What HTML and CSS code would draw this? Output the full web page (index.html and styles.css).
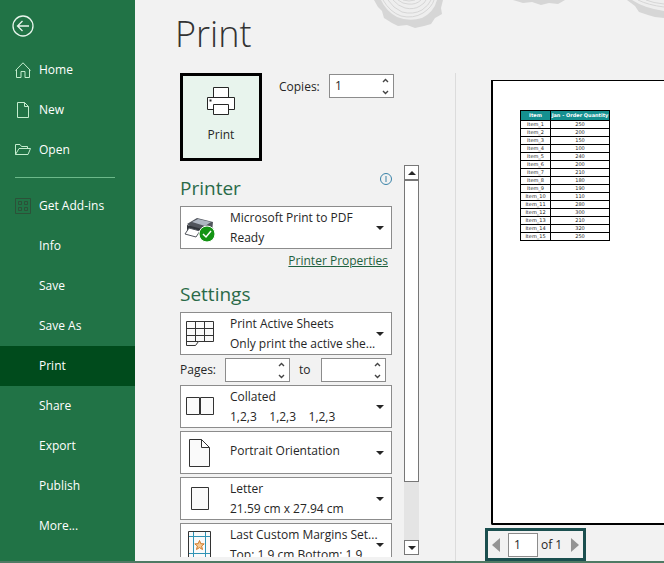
FILE: index.html
```html
<!DOCTYPE html>
<html lang="en">
<head>
    <meta charset="UTF-8">
    <meta name="viewport" content="width=device-width, initial-scale=1.0">
    <title>Print</title>
    <link rel="stylesheet" href="styles.css">
</head>
<body>
    <nav class="sidebar">
        <button type="button" class="back-btn" aria-label="Back">
            <svg width="22" height="22" viewBox="0 0 22 22"><circle cx="11" cy="11" r="10"/><path d="M17 11H5.5M10.5 6L5.5 11l5 5"/></svg>
        </button>
        <a href="#home" class="nav-item">
            <svg class="nav-icon" width="16" height="16" viewBox="0 0 16 16"><path d="M.5 8.5L8 .8l7.500 7.700M1.500 7.500v8h4.500v-6h4v6h4.500v-8"/></svg>
            Home
        </a>
        <a href="#new" class="nav-item">
            <svg class="nav-icon" width="16" height="16" viewBox="0 0 16 16"><path d="M2.500.5h7l4 4v11h-11zM9.500.5v4h4"/></svg>
            New
        </a>
        <a href="#open" class="nav-item">
            <svg class="nav-icon" width="16" height="16" viewBox="0 0 16 16"><path d="M.5 12.500v-10h4.500l1.500 2h6v2M.5 12.500l3.500-6h11.500l-2.500 6z"/></svg>
            Open
        </a>
        <hr class="nav-divider">
        <a href="#addins" class="nav-item">
            <svg class="nav-icon dark" width="16" height="16" viewBox="0 0 16 16"><path d="M.5.5h15v15H.5zM3.500 3.500h3v3h-3zM9.500 3.500h3v3h-3zM3.500 9.500h3v3h-3zM9.500 9.500h3v3h-3z"/></svg>
            Get Add-ins
        </a>
        <a href="#info" class="nav-item">Info</a>
        <a href="#save" class="nav-item">Save</a>
        <a href="#save-as" class="nav-item">Save As</a>
        <a href="#print" class="nav-item active">Print</a>
        <a href="#share" class="nav-item">Share</a>
        <a href="#export" class="nav-item">Export</a>
        <a href="#publish" class="nav-item">Publish</a>
        <a href="#more" class="nav-item">More...</a>
    </nav>

    <main class="main">
        <!-- tree ring decoration -->
        <svg class="rings" width="296" height="30" viewBox="0 0 296 30" aria-hidden="true">
            <path class="bark" d="M6 0l4 7 4 4 2 7 8 5 6 3 9-1 8 3 9-2 7-2 4-6 7-4-1-6 2-8z"/>
            <path class="wood" d="M13 0q5 11 16 17 12 5 25 1 12-6 15-18z"/>
            <path class="grain" d="M15 0q7 12 18 16 12 3 22-3 9-6 11-13M20 0q5 8 14 12 11 3 20-2 7-5 9-10M25 0q5 6 12 8 9 2 15-2 5-3 6-6M30 0q5 4 10 4 8 1 13-4M35 0q6 2 12 0"/>
            <path class="bark" d="M145 0l10 3 9-1 9 3 8-2 9 1 7-4z"/>
            <path class="bark" d="M259 0l8 6 4 6 9 3 7 2 9 1V0z"/>
            <path class="wood" d="M264 0q12 8 32 11V0z"/>
            <path class="grain" d="M270 0q10 5 26 7M278 0q7 3 18 4"/>
        </svg>

        <h1 class="title">Print</h1>

        <div class="columns">
            <section class="options">
                <div class="job">
                    <button type="button" class="print-btn">
                        <svg width="28" height="28" viewBox="0 0 28 28"><path d="M6.500 10.500V.5h15v10M6.500 22.500h-6v-12h27v12h-6M6.500 17.500h15v10h-15z"/><path d="M2.500 12.500h2v2h-2z" fill="#262626" stroke="none"/></svg>
                        Print
                    </button>
                    <label for="copies" class="copies-label">Copies:</label>
                    <div class="spin-box">
                        <input type="number" id="copies" value="1" min="1">
                        <svg class="spin-arrows" width="7" height="17" viewBox="0 0 7 17"><path d="M1 4l2.500-2.500L6 4M1 13l2.500 2.500L6 13"/></svg>
                    </div>
                </div>

                <div class="panel">
                    <div class="panel-content">
                        <div class="heading-row">
                            <h2>Printer</h2>
                            <svg class="info" width="14" height="14" viewBox="0 0 14 14"><circle cx="7" cy="7" r="5.500"/><path d="M7 4v6"/></svg>
                        </div>
                        <div class="picker">
                            <select aria-label="Printer"><option>Microsoft Print to PDF</option></select>
                            <svg class="picker-icon" width="32" height="28" viewBox="0 0 32 28">
                                <path d="M3 10l10-6 16 4-1 10-10 3z" fill="#50545c"/>
                                <path d="M8 8l6-3 13 3-6 4z" fill="#aeb6c2"/>
                                <path d="M3 11l15 4v6L3 17z" fill="#30343a"/>
                                <path d="M5 14l11 3-4 6-11-3z" fill="#fff" stroke="#50545c"/>
                                <circle cx="23" cy="20" r="8" fill="#149414" stroke="#fff"/>
                                <path d="M19 20l3 3 5-6" fill="none" stroke="#fff" stroke-width="1.500"/>
                            </svg>
                            <span class="detail">Ready</span>
                            <span class="caret"></span>
                        </div>
                        <a href="#properties" class="properties">Printer Properties</a>

                        <h2 class="settings-heading">Settings</h2>
                        <div class="picker">
                            <select aria-label="What to print"><option>Print Active Sheets</option></select>
                            <svg class="picker-icon" width="32" height="28" viewBox="0 0 32 28"><path class="ink" d="M2.500 1.500h27v20h-15l-3 4h-9zM2.500 21.500h12M2.500 8.500h27M2.500 15.500h27M11.500 1.500v20M20.500 1.500v20"/></svg>
                            <span class="detail">Only print the active she...</span>
                            <span class="caret"></span>
                        </div>
                        <div class="pages">
                            <label for="from" class="pages-label">Pages:</label>
                            <div class="spin-box">
                                <input type="number" id="from" min="1">
                                <svg class="spin-arrows" width="7" height="17" viewBox="0 0 7 17"><path d="M1 4l2.500-2.500L6 4M1 13l2.500 2.500L6 13"/></svg>
                            </div>
                            <label for="to" class="to-label">to</label>
                            <div class="spin-box">
                                <input type="number" id="to" min="1">
                                <svg class="spin-arrows" width="7" height="17" viewBox="0 0 7 17"><path d="M1 4l2.500-2.500L6 4M1 13l2.500 2.500L6 13"/></svg>
                            </div>
                        </div>
                        <div class="picker">
                            <select aria-label="Collation"><option>Collated</option></select>
                            <svg class="picker-icon" width="32" height="28" viewBox="0 0 32 28"><path class="ink" d="M2.500 4.500h13v17h-13zM16.500 4.500h13v17h-13z"/></svg>
                            <span class="detail">1,2,3 &nbsp;&nbsp; 1,2,3 &nbsp;&nbsp; 1,2,3</span>
                            <span class="caret"></span>
                        </div>
                        <div class="picker single">
                            <select aria-label="Orientation"><option>Portrait Orientation</option></select>
                            <svg class="picker-icon" width="32" height="28" viewBox="0 0 32 28"><path class="ink" d="M5.500.5h12l8 8v19h-20zM17.500.5v8h8"/></svg>
                            <span class="caret"></span>
                        </div>
                        <div class="picker">
                            <select aria-label="Paper size"><option>Letter</option></select>
                            <svg class="picker-icon" width="32" height="28" viewBox="0 0 32 28"><path class="ink" d="M7.500 2.500h17v22h-17z"/></svg>
                            <span class="detail">21.59 cm x 27.94 cm</span>
                            <span class="caret"></span>
                        </div>
                        <div class="picker">
                            <select aria-label="Margins"><option>Last Custom Margins Set...</option></select>
                            <svg class="picker-icon" width="32" height="28" viewBox="0 0 32 28">
                                <path class="ink" d="M4.500.5h22v27h-22z"/>
                                <path d="M9.500 1v26M21.500 1v26M5 5.500h21M5 22.500h21" fill="none" stroke="#2f93b5"/>
                                <path d="M15.500 9.500l1.300 3.200 3.400.2-2.600 2.200.9 3.400-3-1.900-3 1.900.9-3.400-2.600-2.200 3.400-.2z" fill="#f6c992" stroke="#cf7a28"/>
                            </svg>
                            <span class="detail">Top: 1.9 cm Bottom: 1.9</span>
                            <span class="caret"></span>
                        </div>
                    </div>
                    <div class="scrollbar">
                        <button type="button" class="scroll-btn" aria-label="Scroll up"><span class="caret up"></span></button>
                        <div class="track"><div class="thumb"></div></div>
                        <button type="button" class="scroll-btn" aria-label="Scroll down"><span class="caret"></span></button>
                    </div>
                </div>
            </section>

            <section class="preview">
                <div class="sheet">
                    <table class="data">
                        <thead>
                            <tr><th>Item</th><th>Jan - Order Quantity</th></tr>
                        </thead>
                        <tbody>
                            <tr><td>Item_1</td><td>250</td></tr>
                            <tr><td>Item_2</td><td>200</td></tr>
                            <tr><td>Item_3</td><td>150</td></tr>
                            <tr><td>Item_4</td><td>100</td></tr>
                            <tr><td>Item_5</td><td>240</td></tr>
                            <tr><td>Item_6</td><td>200</td></tr>
                            <tr><td>Item_7</td><td>210</td></tr>
                            <tr><td>Item_8</td><td>180</td></tr>
                            <tr><td>Item_9</td><td>190</td></tr>
                            <tr><td>Item_10</td><td>110</td></tr>
                            <tr><td>Item_11</td><td>280</td></tr>
                            <tr><td>Item_12</td><td>300</td></tr>
                            <tr><td>Item_13</td><td>210</td></tr>
                            <tr><td>Item_14</td><td>320</td></tr>
                            <tr><td>Item_15</td><td>250</td></tr>
                        </tbody>
                    </table>
                </div>
                <div class="pager">
                    <button type="button" class="page-btn prev" aria-label="Previous page"></button>
                    <input type="text" id="page" value="1">
                    <label for="page">of 1</label>
                    <button type="button" class="page-btn next" aria-label="Next page"></button>
                </div>
            </section>
        </div>
    </main>
</body>
</html>
```
FILE: styles.css
```css
* {
    margin: 0;
    padding: 0;
    box-sizing: border-box;
}

body {
    font-family: 'Open Sans', 'Segoe UI', sans-serif;
    font-size: 12px;
    line-height: 20px;
    color: #262626;
    background: #f2f2f2;
    height: 100vh;
    display: flex;
    overflow: hidden;
    border-bottom: 2px solid #4f7a64;
}

button, input, select {
    font: inherit;
    color: inherit;
}

svg {
    fill: none;
    flex-shrink: 0;
}

/* Sidebar */
.sidebar {
    flex: 0 0 135px;
    background: #217346;
    padding-top: 15px;
}

.back-btn {
    display: block;
    width: 22px;
    height: 22px;
    margin: 0 0 13px 12px;
    border: none;
    background: none;
    cursor: pointer;
}

.back-btn svg {
    display: block;
    stroke: #e8f5ec;
    stroke-width: 1.3;
}

.nav-item {
    display: flex;
    align-items: center;
    height: 40px;
    padding-left: 39px;
    color: #fff;
    text-decoration: none;
}

.nav-item.active {
    background: #004b1c;
}

.nav-icon {
    margin: 0 8px 0 -24px;
    stroke: #c4ecce;
}

.nav-icon.dark {
    stroke: #2c5138;
}

.nav-divider {
    width: 100px;
    margin: 7px 0 8px 15px;
    border: none;
    border-top: 1px solid #6cb98a;
}

/* Main area */
.main {
    flex: 1;
    min-width: 0;
    display: flex;
    flex-direction: column;
    position: relative;
    padding-left: 45px;
}

.rings {
    position: absolute;
    top: 0;
    right: 0;
}

.bark {
    fill: #d6d6d6;
}

.wood {
    fill: #eee;
}

.grain {
    stroke: #d6d6d6;
}

.title {
    margin-left: -5px;
    padding: 9px 0 14px;
    font-size: 36px;
    font-weight: 300;
    line-height: 50px;
    color: #333;
}

.columns {
    flex: 1;
    min-height: 0;
    display: flex;
}

.options {
    flex: 0 0 276px;
    display: flex;
    flex-direction: column;
    padding-right: 36px;
    border-right: 1px solid #dcdcdc;
}

.job {
    display: flex;
    align-items: flex-start;
    margin-bottom: 4px;
}

.print-btn {
    width: 82px;
    height: 88px;
    display: flex;
    flex-direction: column;
    align-items: center;
    justify-content: center;
    gap: 10px;
    padding-bottom: 3px;
    border: 3px solid #000;
    background: #e8f4ed;
    font-weight: 500;
    cursor: pointer;
}

.print-btn svg {
    stroke: #262626;
    fill: #fff;
}

.copies-label {
    width: 67px;
    padding: 4px 0 0 17px;
}

.spin-box {
    display: flex;
    align-items: center;
    width: 65px;
    height: 24px;
    margin-top: 1px;
    padding: 0 4px 0 5px;
    border: 1px solid #8c8c8c;
    background: #fff;
}

.spin-box input {
    flex: 1;
    min-width: 0;
    border: none;
    outline: none;
    background: none;
    appearance: textfield;
}

.spin-box input::-webkit-inner-spin-button {
    display: none;
}

.spin-arrows {
    stroke: #444;
    stroke-width: 1.4;
}

/* Scrolling settings panel */
.panel {
    flex: 1;
    min-height: 0;
    display: flex;
    gap: 12px;
    padding-bottom: 4px;
}

.panel-content {
    flex: 1;
    min-width: 0;
    overflow: hidden;
}

.heading-row {
    display: flex;
    align-items: flex-start;
    justify-content: space-between;
    height: 41px;
    padding-top: 7px;
}

h2 {
    font-size: 19px;
    font-weight: 400;
    line-height: 32px;
    color: #2a6a48;
}

.info {
    margin-right: -1px;
    stroke: #3a83a8;
}

.picker {
    display: grid;
    grid-template: 22px 21px / 50px 1fr 16px;
    margin-bottom: 3px;
}

.picker select {
    grid-area: 1 / 1 / -1 / -1;
    min-width: 0;
    padding: 0 8px 20px 49px;
    border: 1px solid #8c8c8c;
    border-radius: 0;
    background: #fff;
    appearance: none;
    text-overflow: ellipsis;
}

.picker-icon {
    grid-area: 1 / 1 / -1 / 2;
    margin-left: 4px;
    align-self: center;
    pointer-events: none;
}

.ink {
    fill: #fafafa;
    stroke: #333;
}

.detail {
    grid-area: 2 / 2 / 3 / 3;
    white-space: nowrap;
    pointer-events: none;
}

.picker.single select {
    padding-bottom: 4px;
}

.caret {
    border: 4px solid transparent;
    border-top-color: #262626;
    border-bottom: none;
    pointer-events: none;
}

.picker .caret {
    grid-area: 1 / 3 / -1 / 4;
    place-self: center start;
}

.properties {
    display: block;
    margin: -1px 4px 7px 0;
    text-align: right;
    color: #1f6140;
}

.settings-heading {
    margin-bottom: 2px;
}

.pages {
    display: flex;
    margin-bottom: 3px;
}

.pages .spin-box {
    margin-top: 0;
}

.pages-label {
    width: 45px;
    line-height: 24px;
}

.to-label {
    width: 31px;
    padding-left: 9px;
    line-height: 24px;
}

.scrollbar {
    flex: 0 0 15px;
    display: flex;
    flex-direction: column;
    padding-bottom: 2px;
}

.scroll-btn {
    display: flex;
    align-items: center;
    justify-content: center;
    height: 15px;
    border: 1px solid #777;
    background: #fff;
}

.caret.up {
    transform: rotate(180deg);
}

.track {
    flex: 1;
    background: #e4e4e4;
}

.thumb {
    height: 84%;
    border: 1px solid #777;
    background: #fff;
}

/* Preview */
.preview {
    flex: 1;
    min-width: 0;
    display: flex;
    flex-direction: column;
    align-items: flex-start;
    gap: 3px;
    padding: 7px 0 0 29px;
}

.sheet {
    flex: 1;
    align-self: stretch;
    margin-left: 6px;
    padding: 29px 0 0 27px;
    border: 2px solid #000;
    border-top-width: 1px;
    border-right: none;
    border-bottom-left-radius: 2px;
    background: #fff;
}

.data {
    width: 90px;
    table-layout: fixed;
    border-collapse: collapse;
    font-family: 'DejaVu Sans', sans-serif;
    font-size: 5px;
    line-height: 7px;
    text-align: center;
}

.data th, .data td {
    height: 8px;
    border: 1px solid #000;
    white-space: nowrap;
}

.data th {
    height: 10px;
    background: #159090;
    color: #fff;
}

.data th:first-child {
    width: 30px;
}

.pager {
    display: flex;
    align-items: center;
    height: 33px;
    padding: 0 4px;
    border: 3px solid #1b4f4f;
}

.pager input {
    width: 30px;
    height: 24px;
    margin: 0 3px 0 8px;
    padding-left: 5px;
    border: 1px solid #8c8c8c;
    background: #fff;
}

.page-btn {
    border: 7px solid transparent;
    background: none;
    cursor: pointer;
}

.prev {
    border-left: none;
    border-right: 8px solid #949494;
}

.next {
    margin-left: 9px;
    border-right: none;
    border-left: 8px solid #949494;
}
```
